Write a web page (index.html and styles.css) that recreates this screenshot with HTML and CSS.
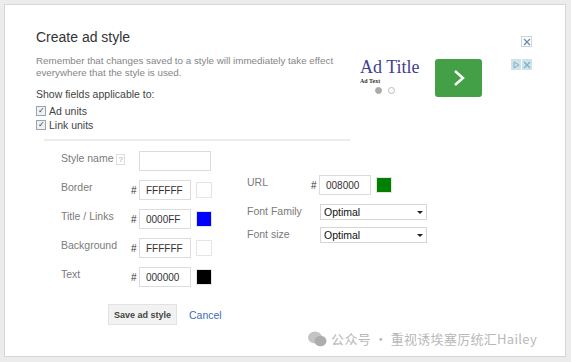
FILE: index.html
```html
<!DOCTYPE html>
<html>
<head>
    <title>Create ad style</title>
    <link rel="stylesheet" href="styles.css">
</head>
<body>
    <div class="dialog">
        <div class="header">
            <div class="intro">
                <h2 class="title">Create ad style</h2>
                <p class="note">Remember that changes saved to a style will immediately take effect<br>everywhere that the style is used.</p>
                <p class="show">Show fields applicable to:</p>
                <label class="check"><span class="box">&#10003;</span>Ad units</label>
                <label class="check"><span class="box">&#10003;</span>Link units</label>
            </div>
            <div class="preview">
                <div class="ad-copy">
                    <div class="ad-title">Ad Title</div>
                    <div class="ad-text">Ad Text</div>
                    <div class="dots"><span class="dot on"></span><span class="dot"></span></div>
                </div>
                <div class="ad-go">
                    <svg width="14" height="20" viewBox="0 0 14 20"><path d="M3 3 L11 10 L3 17" fill="none" stroke="#fff" stroke-width="2.4"/></svg>
                </div>
            </div>
            <div class="tools">
                <span class="close">
                    <svg width="8" height="8" viewBox="0 0 8 8"><path d="M1 1 L7 7 M7 1 L1 7" stroke="#6a8aa6" stroke-width="1.3"/></svg>
                </span>
                <span class="choices">
                    <span class="chip"><svg width="8" height="8" viewBox="0 0 8 8"><path d="M2 1 L7 4 L2 7 Z" fill="none" stroke="#7fb0c8" stroke-width="1"/></svg></span>
                    <span class="chip"><svg width="8" height="8" viewBox="0 0 8 8"><path d="M1 1 L7 7 M7 1 L1 7" stroke="#7fb0c8" stroke-width="1.3"/></svg></span>
                </span>
            </div>
        </div>
        <div class="rule"></div>
        <div class="form">
            <div class="col left">
                <div class="row">
                    <span class="lbl">Style name <span class="help">?</span></span>
                    <span class="field name"></span>
                </div>
                <div class="row">
                    <span class="lbl">Border</span>
                    <span class="hash">#</span>
                    <span class="field">FFFFFF</span>
                    <span class="swatch" style="background:#ffffff"></span>
                </div>
                <div class="row">
                    <span class="lbl">Title / Links</span>
                    <span class="hash">#</span>
                    <span class="field">0000FF</span>
                    <span class="swatch" style="background:#0000ff"></span>
                </div>
                <div class="row">
                    <span class="lbl">Background</span>
                    <span class="hash">#</span>
                    <span class="field">FFFFFF</span>
                    <span class="swatch" style="background:#ffffff"></span>
                </div>
                <div class="row">
                    <span class="lbl">Text</span>
                    <span class="hash">#</span>
                    <span class="field">000000</span>
                    <span class="swatch" style="background:#000000"></span>
                </div>
            </div>
            <div class="col right">
                <div class="row">
                    <span class="lbl wide">URL</span>
                    <span class="hash">#</span>
                    <span class="field">008000</span>
                    <span class="swatch" style="background:#008000"></span>
                </div>
                <div class="row sel-row">
                    <span class="lbl wide">Font Family</span>
                    <span class="select">Optimal<span class="caret"></span></span>
                </div>
                <div class="row sel-row">
                    <span class="lbl wide">Font size</span>
                    <span class="select">Optimal<span class="caret"></span></span>
                </div>
            </div>
        </div>
        <div class="actions">
            <button class="save">Save ad style</button>
            <a class="cancel">Cancel</a>
        </div>
        <div class="mark">
            <svg width="20" height="16" viewBox="0 0 20 16"><ellipse cx="8" cy="6.5" rx="7" ry="6" fill="#c4c4c4"/><ellipse cx="13.5" cy="10" rx="6" ry="5.2" fill="#adadad"/></svg>
            <span>公众号 · 重视诱埃塞厉统汇Hailey</span>
        </div>
    </div>
</body>
</html>
```

FILE: styles.css
```css
body {
    margin: 0;
    background-color: #ececec;
    font-family: "Liberation Sans", Arial, sans-serif;
}
.dialog {
    position: relative;
    box-sizing: border-box;
    width: 562px;
    height: 353px;
    margin: 4px 0 0 4px;
    padding: 24px 33px 0 31px;
    background: white;
    border: 1px solid #d6d6d6;
}
.header {
    display: flex;
    align-items: flex-start;
}
.intro {
    width: 324px;
}
.title {
    margin: 0;
    font-size: 14px;
    line-height: 17px;
    font-weight: normal;
    color: #333;
}
.note {
    margin: 9px 0 0;
    font-size: 9.8px;
    line-height: 12px;
    color: #858585;
}
.show {
    margin: 9px 0 4px;
    font-size: 10.5px;
    line-height: 12px;
    color: #444;
}
.check {
    display: flex;
    align-items: center;
    height: 14px;
    font-size: 10.5px;
    color: #444;
}
.box {
    box-sizing: border-box;
    width: 10px;
    height: 10px;
    margin-right: 3px;
    border: 1px solid #9aa4ae;
    background: #eef1f4;
    font-size: 8px;
    line-height: 8px;
    text-align: center;
    color: #344;
}
.preview {
    display: flex;
    align-items: flex-start;
    margin-top: 28px;
}
.ad-copy {
    width: 75px;
}
.ad-title {
    font-family: "Liberation Serif", serif;
    font-size: 18px;
    line-height: 20px;
    color: #3f3f8f;
}
.ad-text {
    font-family: "Liberation Serif", serif;
    font-size: 6px;
    font-weight: bold;
    color: #333;
    margin-top: 1px;
}
.dots {
    display: flex;
    gap: 6px;
    margin: 3px 0 0 15px;
}
.dot {
    box-sizing: border-box;
    width: 7px;
    height: 7px;
    border-radius: 50%;
    border: 1px solid #bbb;
}
.dot.on {
    background: #aaa;
    border-color: #aaa;
}
.ad-go {
    display: flex;
    align-items: center;
    justify-content: center;
    width: 47px;
    height: 38px;
    margin-top: 2px;
    border-radius: 3px;
    background: #43a047;
}
.tools {
    margin-left: auto;
    margin-top: 7px;
    display: flex;
    flex-direction: column;
    align-items: flex-end;
    gap: 12px;
}
.close {
    box-sizing: border-box;
    display: flex;
    align-items: center;
    justify-content: center;
    width: 11px;
    height: 11px;
    border: 1px solid #c8d4de;
}
.choices {
    display: flex;
    gap: 1px;
}
.chip {
    display: flex;
    align-items: center;
    justify-content: center;
    width: 10px;
    height: 11px;
    background: #cfe3ea;
}
.rule {
    width: 306px;
    height: 2px;
    margin: 7px 0 0 8px;
    background: #ececec;
}
.form {
    display: flex;
    margin: 10px 0 0 25px;
}
.col {
    display: flex;
    flex-direction: column;
}
.left {
    width: 186px;
    gap: 9px;
}
.right {
    margin-top: 24px;
}
.row {
    display: flex;
    align-items: flex-start;
    height: 20px;
}
.lbl {
    width: 70px;
    padding-top: 1px;
    font-size: 10.5px;
    color: #7a7a7a;
}
.lbl.wide {
    width: 64px;
}
.help {
    font-size: 8px;
    color: #aaa;
    border: 1px solid #ddd;
    padding: 0 1px;
}
.hash {
    width: 8px;
    padding-top: 5px;
    font-size: 10px;
    color: #333;
}
.field {
    box-sizing: border-box;
    width: 52px;
    height: 20px;
    padding: 4px 0 0 6px;
    border: 1px solid #dcdcdc;
    font-size: 10px;
    color: #333;
}
.field.name {
    width: 72px;
    margin-left: 8px;
}
.swatch {
    box-sizing: border-box;
    width: 16px;
    height: 16px;
    margin: 2px 0 0 5px;
    border: 1px solid #e4e4e4;
}
.right .row {
    height: 21px;
}
.right .row + .row {
    margin-top: 8px;
}
.right .sel-row + .sel-row {
    margin-top: 2px;
}
.select {
    position: relative;
    box-sizing: border-box;
    width: 107px;
    height: 16px;
    margin-left: 9px;
    padding: 1px 0 0 3px;
    border: 1px solid #d6d6d6;
    font-size: 10.5px;
    color: #111;
}
.caret {
    position: absolute;
    right: 3px;
    top: 6px;
    border-left: 3px solid transparent;
    border-right: 3px solid transparent;
    border-top: 3px solid #222;
}
.actions {
    display: flex;
    align-items: center;
    gap: 12px;
    margin: 17px 0 0 72px;
}
.save {
    width: 69px;
    height: 21px;
    padding: 0;
    border: 1px solid #e2e2e2;
    background: #f2f2f2;
    font-family: "Liberation Sans", Arial, sans-serif;
    font-size: 9px;
    font-weight: bold;
    color: #444;
}
.cancel {
    font-size: 10.5px;
    color: #3d6eb5;
}
.mark {
    position: absolute;
    right: 28px;
    bottom: 8px;
    display: flex;
    align-items: center;
    gap: 4px;
    font-family: "Noto Sans CJK SC", sans-serif;
    font-size: 13px;
    letter-spacing: 0.3px;
    color: #b8b8b8;
}
```
